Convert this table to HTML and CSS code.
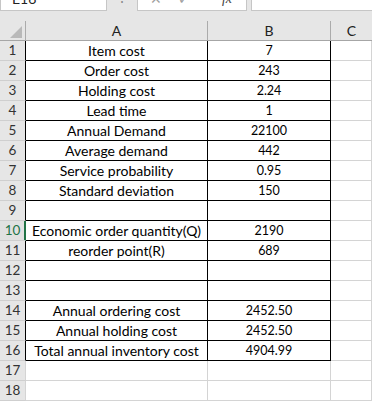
FILE: index.html
```html
<!DOCTYPE html>
<html lang="en">
<head>
  <meta charset="UTF-8" />
  <title>Inventory model</title>
  <link rel="stylesheet" href="styles.css">
</head>
<body>
  <div class="formula-bar">
    <div class="name-box">E16</div>
    <div class="dots">&#8942;</div>
    <div class="fx-box">
      <span class="fx-icon">&#10005;</span>
      <span class="fx-icon">&#10003;</span>
      <span class="fx-icon fx-text">fx</span>
    </div>
    <div class="formula-input"></div>
  </div>

  <div class="sheet">
    <div class="hd corner"><span class="tri"></span></div>
    <div class="hd col">A</div>
    <div class="hd col">B</div>
    <div class="hd col last">C</div>

    <div class="rn dark">1</div><div class="cell b">Item cost</div><div class="cell b num">7</div><div class="cell"></div>
    <div class="rn dark">2</div><div class="cell b">Order cost</div><div class="cell b num">243</div><div class="cell"></div>
    <div class="rn dark">3</div><div class="cell b">Holding cost</div><div class="cell b num">2.24</div><div class="cell"></div>
    <div class="rn dark">4</div><div class="cell b">Lead time</div><div class="cell b num">1</div><div class="cell"></div>
    <div class="rn dark">5</div><div class="cell b">Annual Demand</div><div class="cell b num">22100</div><div class="cell"></div>
    <div class="rn dark">6</div><div class="cell b">Average demand</div><div class="cell b num">442</div><div class="cell"></div>
    <div class="rn dark">7</div><div class="cell b">Service probability</div><div class="cell b num">0.95</div><div class="cell"></div>
    <div class="rn dark">8</div><div class="cell b">Standard deviation</div><div class="cell b num">150</div><div class="cell"></div>
    <div class="rn dark">9</div><div class="cell b"></div><div class="cell b num"></div><div class="cell"></div>
    <div class="rn dark active">10</div><div class="cell b">Economic order quantity(Q)</div><div class="cell b num">2190</div><div class="cell"></div>
    <div class="rn dark">11</div><div class="cell b">reorder point(R)</div><div class="cell b num">689</div><div class="cell"></div>
    <div class="rn dark">12</div><div class="cell b"></div><div class="cell b num"></div><div class="cell"></div>
    <div class="rn dark">13</div><div class="cell b"></div><div class="cell b num"></div><div class="cell"></div>
    <div class="rn dark">14</div><div class="cell b">Annual ordering cost</div><div class="cell b num">2452.50</div><div class="cell"></div>
    <div class="rn dark">15</div><div class="cell b">Annual holding cost</div><div class="cell b num">2452.50</div><div class="cell"></div>
    <div class="rn dark">16</div><div class="cell b">Total annual inventory cost</div><div class="cell b num">4904.99</div><div class="cell"></div>
    <div class="rn">17</div><div class="cell"></div><div class="cell"></div><div class="cell"></div>
    <div class="rn">18</div><div class="cell"></div><div class="cell"></div><div class="cell"></div>
  </div>
</body>
</html>
```

FILE: styles.css
```css
html, body {
  margin: 0;
  padding: 0;
  background: #ffffff;
  font-family: Lato, "Open Sans", sans-serif;
  color: #000;
}

.formula-bar {
  height: 21px;
  background: #e6e6e6;
  display: flex;
  align-items: flex-start;
  overflow: hidden;
}
.name-box {
  box-sizing: border-box;
  width: 107px;
  height: 22px;
  margin-top: -11px;
  background: #fff;
  border: 1px solid #c6c6c6;
  font-size: 14px;
  line-height: 18px;
  padding-left: 11px;
  color: #222;
}
.dots {
  width: 30px;
  margin-top: -12px;
  text-align: center;
  font-size: 14px;
  color: #8a8a8a;
  line-height: 18px;
}
.fx-box {
  box-sizing: border-box;
  width: 110px;
  height: 22px;
  margin-top: -11px;
  background: #fff;
  border: 1px solid #c6c6c6;
  display: flex;
  justify-content: space-around;
  padding: 0 6px 0 4px;
}
.fx-icon {
  font-size: 14px;
  line-height: 18px;
  color: #a0a0a0;
}
.fx-text {
  font-style: italic;
  font-family: "Liberation Serif", serif;
  color: #444;
  margin-left: 16px;
}
.formula-input {
  flex: 1;
  box-sizing: border-box;
  height: 22px;
  margin-top: -11px;
  margin-left: 4px;
  background: #fff;
  border: 1px solid #c6c6c6;
  border-right: none;
}

.sheet {
  display: grid;
  grid-template-columns: 26px 182px 123px 1fr;
  grid-auto-rows: 20px;
}
.sheet > div {
  box-sizing: border-box;
  border-right: 1px solid #d4d4d4;
  border-bottom: 1px solid #d4d4d4;
  white-space: nowrap;
  overflow: hidden;
  text-align: center;
  font-size: 14px;
  line-height: 19px;
}

.hd {
  background: #e6e6e6;
  color: #222;
  border-right-color: #ababab !important;
  border-bottom-color: #a6a6a6 !important;
}
.hd.last {
  border-right: none !important;
}
.corner {
  position: relative;
}
.tri {
  position: absolute;
  left: 10px;
  top: 5px;
  width: 12px;
  height: 12px;
  background: #b9b9b9;
  clip-path: polygon(100% 0, 100% 100%, 0 100%);
}

.rn {
  background: #e6e6e6;
  color: #333;
  font-size: 13.5px !important;
  border-bottom-color: #cfcfcf !important;
}
.rn.dark {
  border-right-color: #000 !important;
}
.rn.active {
  color: #217346;
  background: #e1e1e1;
  box-shadow: inset -1px 0 0 #217346;
  border-right-color: #217346 !important;
}

.cell.b {
  border-right-color: #000;
  border-bottom-color: #000;
}
.cell.num {
  font-size: 12.5px;
}
```
